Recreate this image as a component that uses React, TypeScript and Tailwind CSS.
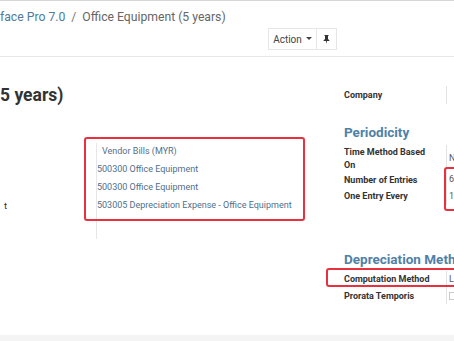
import React from "react";

const Row = ({ label, children, h = "h-[18px]" }: { label: React.ReactNode; children?: React.ReactNode; h?: string }) => (
  <div className={`flex ${h}`}>
    <div className="w-[103px] shrink-0 border-r border-[#e2e2e2] font-bold text-[9px] leading-[13px] text-[#333] flex items-center">{label}</div>
    <div className="pl-[2px] text-[9px] text-[#555] flex items-center">{children}</div>
  </div>
);

export default function App() {
  return (
    <div className="w-[454px] h-[341px] overflow-hidden bg-[#f4f4f4] font-[Roboto,sans-serif]">
      <div className="bg-white border-t border-[#d6d6d6] border-b border-b-[#e8e8e8] h-[57px]">
        <div className="pt-[6px] text-[12.2px] leading-[20px] whitespace-nowrap">
          <span className="text-[#4d7c9b]">face Pro 7.0</span>
          <span className="mx-[6px] text-[#777]">/</span>
          <span className="text-[#666]">Office Equipment (5 years)</span>
        </div>
        <div className="flex ml-[268px] mt-[1px] h-[22px]">
          <div className="w-[49px] border border-[#e6e6e6] flex items-center justify-center gap-[4px] text-[10px] text-[#444]">
            <span>Action</span>
            <svg width="6" height="4" viewBox="0 0 6 4"><path d="M0 0h6L3 3z" fill="#444" /></svg>
          </div>
          <div className="w-[20px] border border-l-0 border-[#e6e6e6] flex items-center justify-center">
            <svg width="7" height="9" viewBox="0 0 7 9"><path d="M1.5 0h4v1H5v3l1.5 1.5V6H4L3.5 9 3 6H.5v-.5L2 4V1h-.5z" fill="#333" /></svg>
          </div>
        </div>
      </div>
      <div className="bg-white h-[278px] flex relative">
        <div className="w-[326px] shrink-0 pt-[24px]">
          <div className="text-[17.5px] leading-[28px] font-bold text-[#333]">5 years)</div>
          <div className="mt-[34px] text-[9px] text-[#4e6f8c]">
            <div className="flex h-[18px]">
              <div className="w-[97px] border-r border-[#e6e6e6]" />
              <div className="pl-[5px] flex items-center text-[#55708a]">Vendor Bills (MYR)</div>
            </div>
            <div className="flex h-[18px]">
              <div className="w-[97px] border-r border-[#e6e6e6]" />
              <div className="flex items-center">500300 Office Equipment</div>
            </div>
            <div className="flex h-[18px]">
              <div className="w-[97px] border-r border-[#e6e6e6]" />
              <div className="flex items-center">500300 Office Equipment</div>
            </div>
            <div className="flex h-[18px]">
              <div className="w-[97px] border-r border-[#e6e6e6] flex items-center pl-[4px] text-[9.5px] text-[#333]">t</div>
              <div className="flex items-center">503005 Depreciation Expense - Office Equipment</div>
            </div>
            <div className="flex h-[24px]">
              <div className="w-[97px] border-r border-[#e6e6e6]" />
            </div>
          </div>
        </div>
        <div className="flex-1 pl-[18px] pt-[29px]">
          <Row label="Company" />
          <div className="mt-[17px] text-[13.5px] leading-[22px] font-bold text-[#4f81a7] whitespace-nowrap">Periodicity</div>
          <div className="mt-[2px]">
            <Row label={<span>Time Method Based<br />On</span>} h="h-[27px]">N</Row>
            <Row label="Number of Entries" h="h-[16px]">6</Row>
            <Row label="One Entry Every" h="h-[17px]">1</Row>
          </div>
          <div className="mt-[43px] text-[13.5px] leading-[22px] font-bold text-[#4f81a7] whitespace-nowrap">Depreciation Method</div>
          <div className="mt-[1px]">
            <Row label="Computation Method" h="h-[17px]">L</Row>
            <Row label="Prorata Temporis" h="h-[16px]">
              <div className="w-[8px] h-[8px] border border-[#ccc]" />
            </Row>
          </div>
        </div>
        <div className="absolute left-[84px] top-[80px] w-[221px] h-[84px] border-[2.5px] border-[#e8303f] rounded-[3px]" />
        <div className="absolute left-[444px] top-[110px] w-[30px] h-[44px] border-[2.5px] border-[#e8303f] rounded-[3px]" />
        <div className="absolute left-[326px] top-[211px] w-[150px] h-[19px] border-[2.5px] border-[#e8303f] rounded-[3px]" />
      </div>
    </div>
  );
}
